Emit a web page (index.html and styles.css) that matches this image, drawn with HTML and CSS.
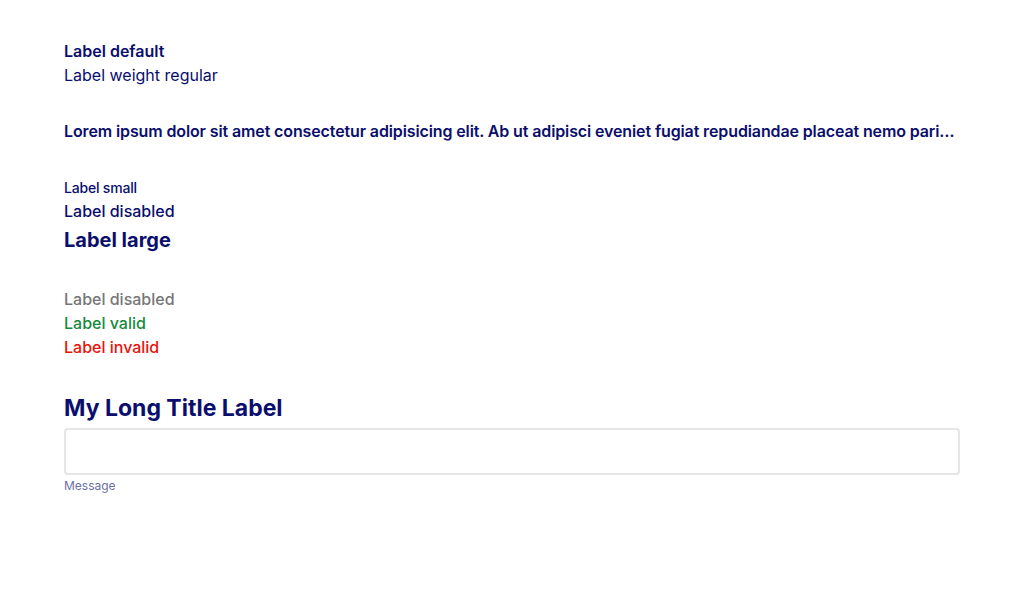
FILE: index.html
```html
<!DOCTYPE html>
<html>
<head>
<meta charset="utf-8">
<link rel="stylesheet" href="styles.css">
</head>
<body>
<main class="page">
  <section class="group">
    <div class="label label-bold">Label default</div>
    <div class="label label-regular">Label weight regular</div>
  </section>
  <section class="group">
    <div class="label label-bold truncate">Lorem ipsum dolor sit amet consectetur adipisicing elit. Ab ut adipisci eveniet fugiat repudiandae placeat nemo pariatur quae, dolorum voluptatibus consequatur nisi.</div>
  </section>
  <section class="group">
    <div class="label label-small">Label small</div>
    <div class="label label-semibold">Label disabled</div>
    <div class="label label-large">Label large</div>
  </section>
  <section class="group">
    <div class="label label-semibold is-disabled">Label disabled</div>
    <div class="label label-semibold is-valid">Label valid</div>
    <div class="label label-semibold is-invalid">Label invalid</div>
  </section>
  <section class="field">
    <label class="field-title" for="f1">My Long Title Label</label>
    <input id="f1" class="field-input" type="text">
    <div class="field-message">Message</div>
  </section>
</main>
</body>
</html>
```
FILE: styles.css
```css
* { box-sizing: border-box; }
html, body { margin: 0; padding: 0; background: #fff; }
body {
  font-family: Inter, "Noto Sans", sans-serif;
  color: #0a0e6c;
}
.page {
  padding: 39px 64px;
  width: 1024px;
  display: flex;
  flex-direction: column;
  gap: 32px;
}
.group { display: flex; flex-direction: column; }
.label { font-size: 16px; line-height: 24px; }
.label-bold { font-weight: 600; }
.label-regular { font-weight: 400; }
.label-semibold { font-weight: 500; }
.label-small { font-size: 14px; line-height: 20px; font-weight: 500; margin-top: 3px; margin-bottom: 1px; letter-spacing: -0.2px; }
.label-large { font-size: 20px; line-height: 30px; font-weight: 700; margin-top: 2px; }
.truncate { white-space: nowrap; overflow: hidden; text-overflow: ellipsis; letter-spacing: -0.12px; }
.is-disabled { color: #767676; }
.is-valid { color: #168a3e; }
.is-invalid { color: #e8130b; }
.field { display: flex; flex-direction: column; }
.field-title { font-size: 23px; line-height: 32px; font-weight: 700; margin-top: 1px; margin-bottom: 4px; }
.field-input {
  height: 47px;
  border: 2px solid #e6e6e6;
  border-radius: 4px;
  font: inherit;
  outline: none;
}
.field-message { font-size: 12px; line-height: 18px; color: #6b6fa8; margin-top: 2px; }
```
